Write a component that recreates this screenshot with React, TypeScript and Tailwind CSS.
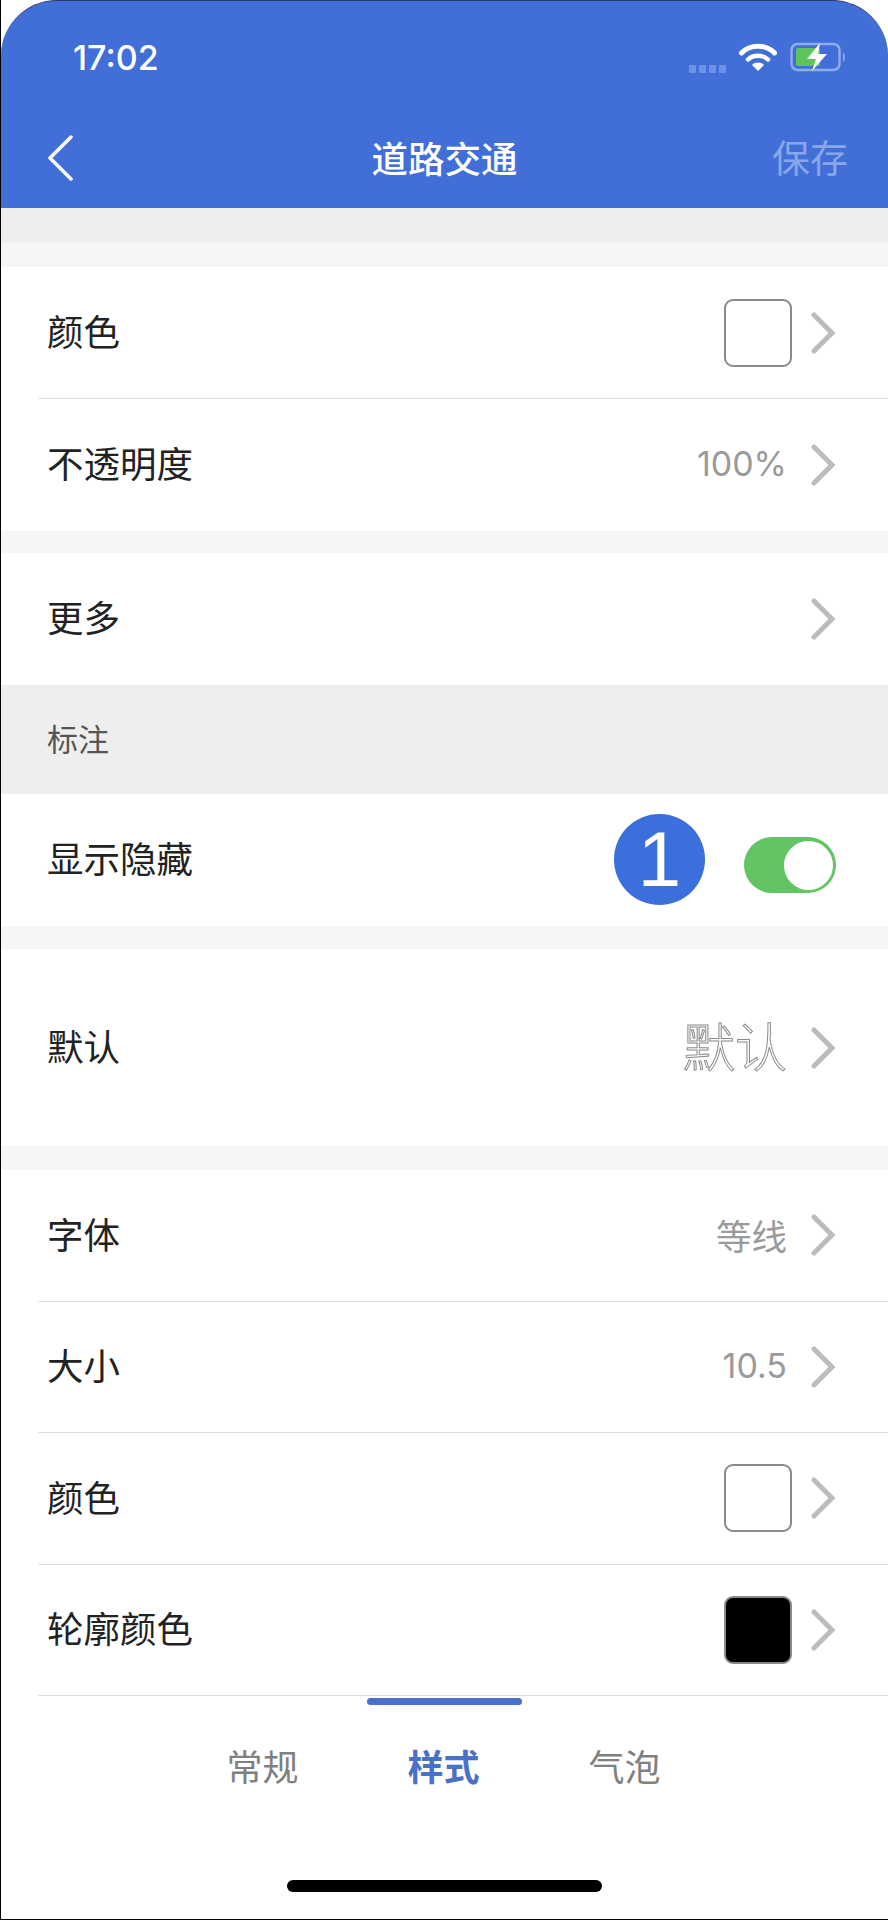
import React from "react";

const cjk = { fontFamily: '"Noto Sans CJK SC", "Noto Sans", sans-serif' };

function Chevron() {
  return (
    <svg width="26" height="42" viewBox="0 0 26 42" className="shrink-0" fill="none">
      <path d="M4 3 L22 21 L4 39" stroke="#bcbcbc" strokeWidth="5" strokeLinecap="round" strokeLinejoin="miter" />
    </svg>
  );
}

function Swatch({ black }: { black?: boolean }) {
  return (
    <div
      className={
        black
          ? "w-[68px] h-[68px] rounded-[9px] border-2 border-[#8a8a8a] bg-black"
          : "w-[68px] h-[68px] rounded-[9px] border-2 border-[#8a8a8a] bg-white"
      }
    />
  );
}

function Row({
  label,
  children,
  border,
  tall,
  compact,
}: {
  label: string;
  children?: React.ReactNode;
  border?: boolean;
  tall?: boolean;
  compact?: boolean;
}) {
  return (
    <div className={tall ? "bg-white pl-[37px] h-[197px]" : compact ? "bg-white pl-[37px] h-[131.5px]" : "bg-white pl-[37px] h-[132px]"}>
      <div
        className={
          border
            ? "h-full flex items-center pr-[52px] border-b border-[#dedede]"
            : "h-full flex items-center pr-[52px]"
        }
      >
        <span className="text-[36.5px] leading-none text-[#222222] ml-[9px] mb-[3px]">{label}</span>
        <div className="ml-auto flex items-center gap-[18px]">
          {children}
        </div>
      </div>
    </div>
  );
}

function Value({ text, latin }: { text: string; latin?: boolean }) {
  return latin ? (
    <span className="text-[34px] leading-none text-[#9a9a9a] mr-[5px] mb-[2px]" style={{ fontFamily: '"Inter", sans-serif' }}>{text}</span>
  ) : (
    <span className="text-[35.5px] leading-none text-[#9a9a9a] mr-[5px] mb-[2px]">{text}</span>
  );
}

export default function App() {
  return (
    <div className="w-[888px] h-[1920px] bg-white overflow-hidden flex flex-col border-l border-b border-black" style={cjk}>
      <header className="h-[208px] shrink-0 bg-[#426ed8] rounded-t-[56px] border-t border-[#2a3a70] flex flex-col text-white">
        <div className="h-[98px] pt-[32px] pl-[72px] pr-[42px] flex items-start">
          <span className="text-[34px] leading-[50px] font-medium" style={{ fontFamily: '"Inter", sans-serif' }}>17:02</span>
          <div className="ml-auto flex items-center gap-[13px] mt-[8px]">
            <div className="flex gap-[3px] mt-[24px]">
              <span className="w-[7px] h-[8px] rounded-[1px] bg-[#6f90e4]" />
              <span className="w-[7px] h-[8px] rounded-[1px] bg-[#6f90e4]" />
              <span className="w-[7px] h-[8px] rounded-[1px] bg-[#6f90e4]" />
              <span className="w-[7px] h-[8px] rounded-[1px] bg-[#6f90e4]" />
            </div>
            <svg width="38" height="32" viewBox="0 0 38 32" fill="none">
              <path d="M2.5 12 C11 3 27 3 35.5 12" stroke="white" strokeWidth="5" strokeLinecap="round" />
              <path d="M9 18.5 C14 13.5 24 13.5 29 18.5" stroke="white" strokeWidth="4.5" strokeLinecap="round" />
              <path d="M13 24 L19 30 L25 24 C21.5 20.8 16.5 20.8 13 24 Z" fill="white" />
            </svg>
            <svg width="56" height="32" viewBox="0 0 56 32" fill="none">
              <rect x="1.5" y="3" width="48" height="26" rx="6" stroke="#8eabf0" strokeWidth="2.5" />
              <path d="M53 11 C55.5 13 55.5 19 53 21 Z" fill="#8eabf0" />
              <rect x="6" y="7" width="24" height="18" rx="2" fill="#5dc45c" />
              <path d="M30 2 L17 18 H26 L22 30 L37 13 H28 Z" fill="white" />
            </svg>
          </div>
        </div>
        <div className="h-[110px] flex items-center relative pt-[10px] pl-[46px] pr-[40px]">
          <svg width="26" height="46" viewBox="0 0 26 46" fill="none">
            <path d="M24 2 L3 23 L24 44" stroke="white" strokeWidth="3.5" strokeLinecap="round" strokeLinejoin="round" />
          </svg>
          <span className="absolute left-0 right-0 text-center text-[36.5px] leading-none font-medium">道路交通</span>
          <span className="ml-auto text-[38px] leading-none text-[#89a6ea] mb-[4px]">保存</span>
        </div>
      </header>

      <main className="flex-1 flex flex-col min-h-0">
        <div className="h-[35px] bg-[#eeeeee]" />
        <div className="h-[24px] bg-[#f6f6f6]" />
        <Row label="颜色" border><Swatch /><Chevron /></Row>
        <Row label="不透明度"><Value text="100%" latin /><Chevron /></Row>
        <div className="h-[22px] bg-[#f6f6f6]" />
        <Row label="更多"><Chevron /></Row>
        <div className="h-[109px] bg-[#eeeeee] flex items-center pl-[46px]">
          <span className="text-[31px] leading-none text-[#555555] mb-[5px]">标注</span>
        </div>
        <Row label="显示隐藏">
          <div className="w-[91px] h-[91px] rounded-full bg-[#3a6fdc] flex items-center justify-center text-white text-[78px] leading-none mr-[21px] mb-[2px]" style={{ fontFamily: '"Liberation Sans", sans-serif' }}>1</div>
          <div className="w-[92px] h-[56px] rounded-full bg-[#63c466] flex items-center justify-end pr-[3px] mt-[10px]">
            <div className="w-[49px] h-[49px] rounded-full bg-white" />
          </div>
        </Row>
        <div className="h-[23px] bg-[#f6f6f6]" />
        <Row label="默认" tall>
          <span className="text-[52px] leading-none text-transparent [-webkit-text-stroke:1px_#8a8a8a] font-light mr-[5px] mb-[6px]">默认</span>
          <Chevron />
        </Row>
        <div className="h-[24px] bg-[#f6f6f6]" />
        <Row label="字体" border compact><Value text="等线" /><Chevron /></Row>
        <Row label="大小" border compact><Value text="10.5" latin /><Chevron /></Row>
        <Row label="颜色" border compact><Swatch /><Chevron /></Row>
        <Row label="轮廓颜色" border compact><Swatch black /><Chevron /></Row>

        <div className="relative flex-1 bg-white flex flex-col">
          <div className="absolute left-[366px] top-[2px] w-[155px] h-[7px] rounded-full bg-[#4a70cc]" />
          <nav className="flex justify-center gap-[109px] mt-[44px] pr-[2px]">
            <span className="text-[36px] leading-[50px] text-[#808080]">常规</span>
            <span className="text-[36px] leading-[50px] font-bold text-[#4a70c8]">样式</span>
            <span className="text-[36px] leading-[50px] text-[#808080]">气泡</span>
          </nav>
          <div className="mt-auto mb-[27px] mx-auto w-[315px] h-[12px] rounded-full bg-black" />
        </div>
      </main>
    </div>
  );
}
